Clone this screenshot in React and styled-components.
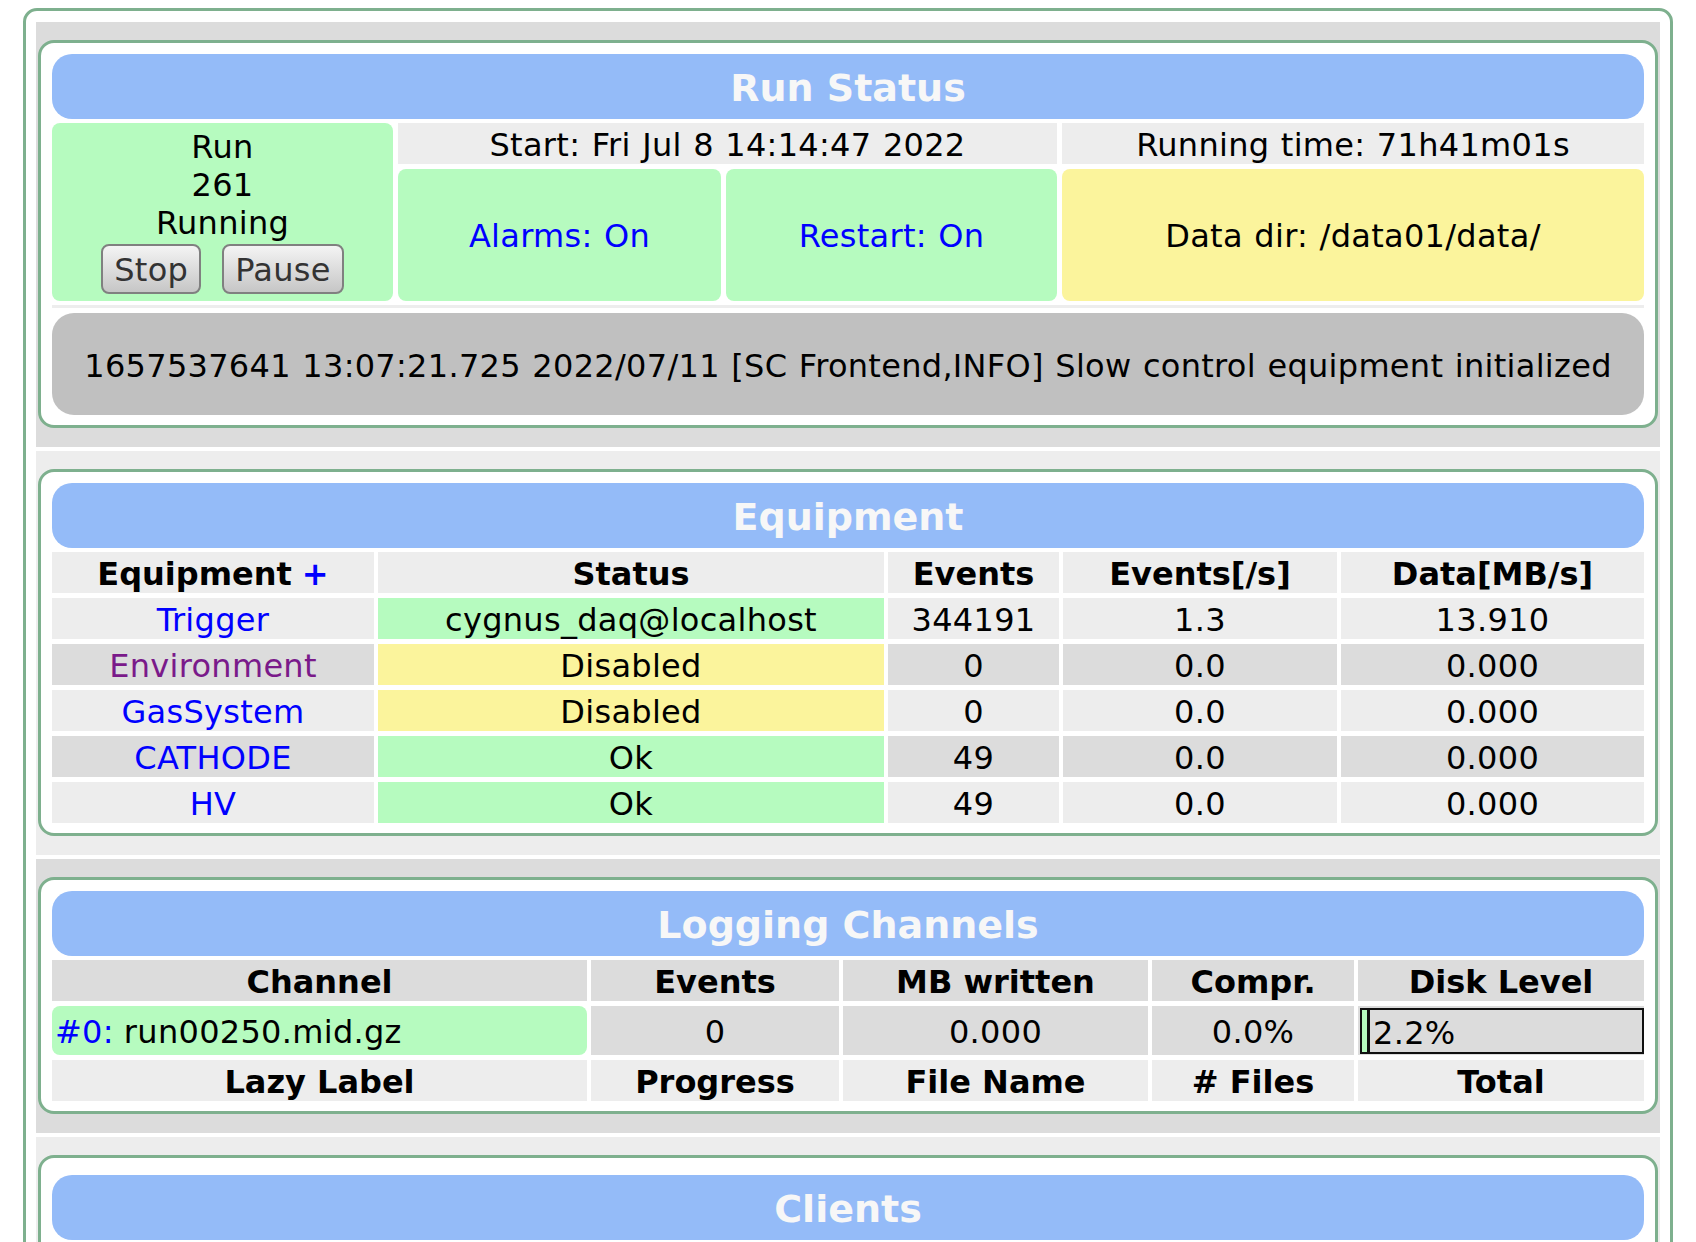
import styled, { createGlobalStyle } from "styled-components";

const GlobalStyle = createGlobalStyle`
  body {
    margin: 8px;
    background: #fff;
    color: #000;
    font-family: "DejaVu Sans", Verdana, sans-serif;
    font-size: 32px;
  }
`;

const GREEN = "#b6fbbf";
const YELLOW = "#fbf49c";
const LIGHT = "#ededed";
const MID = "#dcdcdc";
const BLUE = "#0000ff";

const Frame = styled.div`
    box-sizing: border-box;
    width: 1650px;
    margin: 0 auto;
    border: 3px solid #7eb08e;
    border-radius: 14px;
    padding: 11px 10px;
    display: flex;
    flex-direction: column;
    gap: 4px;
`;

const Section = styled.div`
    background: ${(p) => p.$bg};
    padding: 18px 2px 19px;
`;

const Card = styled.div`
    background: #fff;
    border: 3px solid #7eb08e;
    border-radius: 16px;
    padding: ${(p) => p.$top || 11}px 11px 10px;
`;

const Header = styled.div`
    height: 65px;
    line-height: 69px;
    overflow: hidden;
    background: #94bbf8;
    border-radius: 20px;
    text-align: center;
    color: #f7f7f7;
    font-size: 38px;
    font-weight: bold;
    margin-bottom: 4px;
`;

const RunGrid = styled.div`
    display: grid;
    grid-template-columns: 341px 323px 331px 1fr;
    grid-template-rows: 41px 132px;
    gap: 5px;
`;

const Cell = styled.div`
    background: ${(p) => p.$bg};
    border-radius: ${(p) => (p.$round ? "8px" : "0")};
    display: flex;
    align-items: center;
    justify-content: ${(p) => (p.$left ? "flex-start" : "center")};
    padding: ${(p) => (p.$left ? "2px 3px 0" : "2px 0 0")};
    color: ${(p) => p.$color || "#000"};
    font-weight: ${(p) => (p.$head ? "bold" : "normal")};
    letter-spacing: ${(p) => (p.$head ? "0" : "0.3px")};
    word-spacing: ${(p) => (p.$head ? "0" : "1px")};
    white-space: nowrap;
    grid-column: ${(p) => p.$span || "auto"};
`;

const RunCell = styled.div`
    grid-row: span 2;
    background: ${GREEN};
    border-radius: 8px;
    padding: 5px 0;
    text-align: center;
    line-height: 38px;
    letter-spacing: 0.3px;
`;

const Buttons = styled.div`
    display: flex;
    justify-content: center;
    gap: 21px;
    margin-top: 2px;
`;

const Button = styled.button`
    height: 50px;
    padding: 2px 11px 0;
    border: 2px solid #808080;
    border-radius: 8px;
    background: linear-gradient(#f4f4f4, #c6c6c6);
    color: #333;
    font-family: inherit;
    font-size: 32px;
    letter-spacing: 0.3px;
    cursor: pointer;
`;

const Divider = styled.div`
    height: 3px;
    background: ${LIGHT};
    margin: 4px 0 5px;
`;

const Message = styled.div`
    height: 102px;
    padding-top: 3px;
    box-sizing: border-box;
    background: #c0c0c0;
    border-radius: 22px;
    display: flex;
    align-items: center;
    justify-content: center;
    letter-spacing: 0.3px;
    word-spacing: 1px;
    white-space: nowrap;
`;

const Table = styled.div`
    display: grid;
    grid-template-columns: ${(p) => p.$cols};
    grid-template-rows: ${(p) => p.$rows || "none"};
    grid-auto-rows: 41px;
    column-gap: 4px;
    row-gap: 5px;
`;

const Plus = styled.span`
    color: ${BLUE};
    margin-left: 10px;
`;

const Hash = styled.span`
    color: ${BLUE};
    margin-right: 10px;
`;

const DiskBox = styled.div`
    flex: 1;
    align-self: stretch;
    margin: 0 0 1px 2px;
    border: 2px solid #111;
    background: ${MID};
    display: flex;
    align-items: center;
    padding-top: 3px;
    letter-spacing: 0.3px;
`;

const DiskBar = styled.div`
    align-self: stretch;
    margin-top: -3px;
    width: 5px;
    background: ${GREEN};
    border-right: 3px solid #111;
    margin-right: 3px;
`;

const ClientsBody = styled.div`
    height: 60px;
`;

const equipment = [
    { name: "Trigger", color: BLUE, status: "cygnus_daq@localhost", state: GREEN, events: "344191", rate: "1.3", data: "13.910" },
    { name: "Environment", color: "#7a1a8a", status: "Disabled", state: YELLOW, events: "0", rate: "0.0", data: "0.000" },
    { name: "GasSystem", color: BLUE, status: "Disabled", state: YELLOW, events: "0", rate: "0.0", data: "0.000" },
    { name: "CATHODE", color: BLUE, status: "Ok", state: GREEN, events: "49", rate: "0.0", data: "0.000" },
    { name: "HV", color: BLUE, status: "Ok", state: GREEN, events: "49", rate: "0.0", data: "0.000" },
];

const RunStatus = () => (
    <Section $bg={MID}>
        <Card>
            <Header>Run Status</Header>
            <RunGrid>
                <RunCell>
                    <div>Run</div>
                    <div>261</div>
                    <div>Running</div>
                    <Buttons>
                        <Button>Stop</Button>
                        <Button>Pause</Button>
                    </Buttons>
                </RunCell>
                <Cell $bg={LIGHT} $span="span 2">Start: Fri Jul 8 14:14:47 2022</Cell>
                <Cell $bg={LIGHT}>Running time: 71h41m01s</Cell>
                <Cell $bg={GREEN} $round $color={BLUE}>Alarms: On</Cell>
                <Cell $bg={GREEN} $round $color={BLUE}>Restart: On</Cell>
                <Cell $bg={YELLOW} $round>Data dir: /data01/data/</Cell>
            </RunGrid>
            <Divider />
            <Message>
                1657537641 13:07:21.725 2022/07/11 [SC Frontend,INFO] Slow control equipment initialized
            </Message>
        </Card>
    </Section>
);

const Equipment = () => (
    <Section $bg={LIGHT}>
        <Card>
            <Header>Equipment</Header>
            <Table $cols="322px 506px 171px 274px 1fr">
                <Cell $bg={LIGHT} $head>Equipment<Plus>+</Plus></Cell>
                <Cell $bg={LIGHT} $head>Status</Cell>
                <Cell $bg={LIGHT} $head>Events</Cell>
                <Cell $bg={LIGHT} $head>Events[/s]</Cell>
                <Cell $bg={LIGHT} $head>Data[MB/s]</Cell>
                {equipment.map((eq, i) => {
                    const bg = i % 2 === 0 ? LIGHT : MID;
                    return [
                        <Cell key={eq.name + "n"} $bg={bg} $color={eq.color}>{eq.name}</Cell>,
                        <Cell key={eq.name + "s"} $bg={eq.state}>{eq.status}</Cell>,
                        <Cell key={eq.name + "e"} $bg={bg}>{eq.events}</Cell>,
                        <Cell key={eq.name + "r"} $bg={bg}>{eq.rate}</Cell>,
                        <Cell key={eq.name + "d"} $bg={bg}>{eq.data}</Cell>,
                    ];
                })}
            </Table>
        </Card>
    </Section>
);

const Logging = () => (
    <Section $bg={MID}>
        <Card>
            <Header>Logging Channels</Header>
            <Table $cols="535px 248px 305px 202px 1fr" $rows="41px 49px 41px">
                <Cell $bg={MID} $head>Channel</Cell>
                <Cell $bg={MID} $head>Events</Cell>
                <Cell $bg={MID} $head>MB written</Cell>
                <Cell $bg={MID} $head>Compr.</Cell>
                <Cell $bg={MID} $head>Disk Level</Cell>
                <Cell $bg={GREEN} $round $left><Hash>#0:</Hash>run00250.mid.gz</Cell>
                <Cell $bg={MID}>0</Cell>
                <Cell $bg={MID}>0.000</Cell>
                <Cell $bg={MID}>0.0%</Cell>
                <Cell $bg={MID}>
                    <DiskBox>
                        <DiskBar />
                        2.2%
                    </DiskBox>
                </Cell>
                <Cell $bg={LIGHT} $head>Lazy Label</Cell>
                <Cell $bg={LIGHT} $head>Progress</Cell>
                <Cell $bg={LIGHT} $head>File Name</Cell>
                <Cell $bg={LIGHT} $head># Files</Cell>
                <Cell $bg={LIGHT} $head>Total</Cell>
            </Table>
        </Card>
    </Section>
);

const Clients = () => (
    <Section $bg={LIGHT}>
        <Card $top={17}>
            <Header>Clients</Header>
            <ClientsBody />
        </Card>
    </Section>
);

const App = () => {
    return (
        <>
            <GlobalStyle />
            <Frame>
                <RunStatus />
                <Equipment />
                <Logging />
                <Clients />
            </Frame>
        </>
    );
};

export default App;
